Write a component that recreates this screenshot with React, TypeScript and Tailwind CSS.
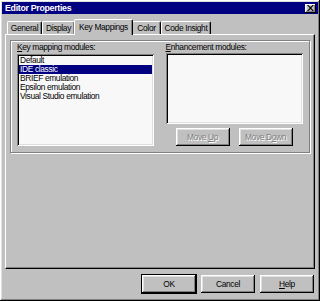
import React from 'react';

const raised = 'shadow-[inset_-1px_-1px_#000,inset_1px_1px_#fff,inset_-2px_-2px_#808080,inset_2px_2px_#dfdfdf]';
const sunken = 'shadow-[inset_1px_1px_#808080,inset_-1px_-1px_#fff,inset_2px_2px_#000,inset_-2px_-2px_#dfdfdf]';

const tabs = ['General', 'Display', 'Key Mappings', 'Color', 'Code Insight'];
const tabWidths = ['w-[35px]', 'w-[33px]', 'w-[59px]', 'w-[29px]', 'w-[50px]'];

const keyModules = ['Default', 'IDE classic', 'BRIEF emulation', 'Epsilon emulation', 'Visual Studio emulation'];

const Button = ({ label, hot, disabled, isDefault }: { label: string; hot?: number; disabled?: boolean; isDefault?: boolean }) => {
    const color = disabled ? 'text-[#808080] [text-shadow:1px_1px_#fff]' : 'text-black';
    return (
        <div
            className={`flex items-center justify-center h-[18px] w-[54px] bg-[#c0c0c0] ${raised} ${
                isDefault ? 'outline outline-1 outline-black' : ''
            }`}
        >
            {hot === undefined ? (
                <span className={color}>{label}</span>
            ) : (
                <span className={color}>
                    {label.slice(0, hot)}
                    <span className="underline">{label.charAt(hot)}</span>
                    {label.slice(hot + 1)}
                </span>
            )}
        </div>
    );
};

export default function App() {
    return (
        <div
            className={`w-[320px] h-[301px] bg-[#c0c0c0] flex flex-col p-[2px] ${raised} text-[8.4px] tracking-[-0.35px] leading-[9px] text-black`}
            style={{ fontFamily: '"Liberation Sans", Arial, sans-serif' }}
        >
            {/* title bar */}
            <div className="h-[12px] bg-[#000080] flex items-center justify-between pl-[3px] pr-[2px]">
                <span className="text-white font-bold text-[8.8px] tracking-[-0.3px]">Editor Properties</span>
                <div className={`w-[11px] h-[9px] bg-[#c0c0c0] ${raised} flex items-center justify-center`}>
                    <svg width="7" height="6" viewBox="0 0 7 6">
                        <path d="M0 0 L1.5 0 L3.5 2 L5.5 0 L7 0 L4.2 3 L7 6 L5.5 6 L3.5 4 L1.5 6 L0 6 L2.8 3 Z" fill="#000" />
                    </svg>
                </div>
            </div>

            {/* tabs */}
            <div className="flex items-end h-[17px] pl-[5px] mt-[3px]">
                {tabs.map((t, i) => {
                    const active = i === 2;
                    return (
                        <div
                            key={t}
                            className={`${tabWidths[i]} flex items-center justify-center border-t border-l border-white border-r border-r-black rounded-t-[2px] shadow-[inset_-1px_0_#808080] ${
                                active ? 'h-[16px] -mx-[1px] relative z-10 bg-[#c0c0c0] -mb-px pb-px' : 'h-[13px]'
                            }`}
                        >
                            {t}
                        </div>
                    );
                })}
            </div>

            {/* tab page */}
            <div className="mx-[3px] h-[235px] border-t border-l border-white border-r border-b border-r-black border-b-black shadow-[inset_-1px_-1px_#808080] flex flex-col">
                <div className="mx-[4px] mt-[5px] h-[113px] border border-[#808080] shadow-[1px_1px_#fff,inset_1px_1px_#fff] flex px-[6px] pt-[2px] gap-[12px]">
                    <div className="flex flex-col w-[137px]">
                        <span className="h-[9px]">
                            <span className="underline">K</span>ey mapping modules:
                        </span>
                        <div className={`mt-[2px] h-[92px] bg-[#f8f8f8] ${sunken} p-[2px] flex flex-col`}>
                            {keyModules.map((m, i) => (
                                <div
                                    key={m}
                                    className={`h-[9px] pl-[1px] ${i === 1 ? 'bg-[#000080] text-white' : ''}`}
                                >
                                    {m}
                                </div>
                            ))}
                        </div>
                    </div>
                    <div className="flex flex-col w-[138px]">
                        <span className="h-[9px]">
                            <span className="underline">E</span>nhancement modules:
                        </span>
                        <div className={`mt-[1px] h-[71px] bg-[#f8f8f8] ${sunken}`} />
                        <div className="flex gap-[9px] mt-[4px] pl-[10px]">
                            <Button label="Move Up" hot={5} disabled />
                            <Button label="Move Down" hot={6} disabled />
                        </div>
                    </div>
                </div>
            </div>

            {/* dialog buttons */}
            <div className="flex justify-end gap-[5px] mt-[6px] pr-[4px]">
                <Button label="OK" isDefault />
                <Button label="Cancel" />
                <Button label="Help" hot={0} />
            </div>
        </div>
    );
}
